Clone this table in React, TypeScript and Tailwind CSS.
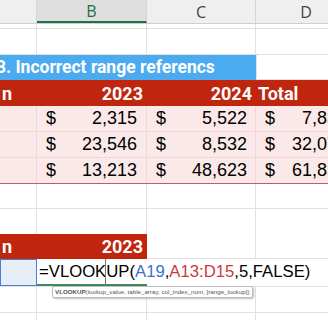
const grid = "border-[#e1e1e1]";

const Dollar = ({ value, pl, pr }: { value: string; pl: string; pr: string }) => (
  <div className={`flex h-full items-center justify-between ${pl} ${pr}`}>
    <span>$</span>
    <span>{value}</span>
  </div>
);

const rows = [
  ["2,315", "5,522", "7,837"],
  ["23,546", "8,532", "32,078"],
  ["13,213", "48,623", "61,836"],
];

const App = () => {
  return (
    <div className="h-[320px] w-[328px] overflow-hidden bg-white font-['Liberation_Sans',sans-serif] text-black">
      {/* column headers */}
      <div className="flex h-[24px] border-b border-[#cfcfcf] bg-[#efefef] text-[16px] font-['Open_Sans',sans-serif] text-[#444]">
        <div className="w-[37px] shrink-0 border-r border-[#d4d4d4]" />
        <div className="flex w-[110px] shrink-0 items-center justify-center border-b-2 border-r border-b-[#1e7145] border-r-[#d4d4d4] bg-[#dedede] text-[#1e7145]">
          B
        </div>
        <div className="flex w-[109px] shrink-0 items-center justify-center border-r border-[#d4d4d4]">C</div>
        <div className="flex w-[100px] shrink-0 items-center justify-center">D</div>
      </div>

      {/* partial row + blank row */}
      <div className={`flex h-[5px] border-b ${grid}`}>
        <div className={`w-[37px] shrink-0 border-r ${grid}`} />
        <div className={`w-[110px] shrink-0 border-r ${grid}`} />
        <div className={`w-[109px] shrink-0 border-r ${grid}`} />
      </div>
      <div className={`flex h-[26px] border-b ${grid}`}>
        <div className={`w-[37px] shrink-0 border-r ${grid}`} />
        <div className={`w-[110px] shrink-0 border-r ${grid}`} />
        <div className={`w-[109px] shrink-0 border-r ${grid}`} />
      </div>

      {/* title */}
      <div className="flex h-[25px]">
        <div className="flex w-[256px] shrink-0 items-center overflow-hidden whitespace-nowrap bg-[#4babf0] font-['Roboto',sans-serif] text-[17.5px] font-bold text-white">
          <span className="-ml-[4px]">3. Incorrect range referencs</span>
        </div>
        <div className={`flex-1 border-l border-b ${grid}`} />
      </div>

      {/* red header */}
      <div className="flex h-[26px] items-center bg-[#c0250e] font-['Roboto',sans-serif] text-[18px] font-bold text-white">
        <div className="w-[37px] shrink-0 pl-[2px]">n</div>
        <div className="w-[110px] shrink-0 pr-[4px] text-right">2023</div>
        <div className="w-[109px] shrink-0 pr-[4px] text-right">2024</div>
        <div className="flex-1 whitespace-nowrap pl-[2px]">Total</div>
      </div>

      {/* data */}
      <div className="bg-[#fbe9e9] text-[18px]">
        {rows.map((r, i) => (
          <div
            key={i}
            className={`flex h-[26px] border-b ${i === 2 ? "border-[#c9595b]" : "border-[#f0d6d6]"}`}
          >
            <div className="w-[37px] shrink-0 border-r border-[#f0d6d6]" />
            <div className="w-[110px] shrink-0 border-r border-[#f0d6d6]">
              <Dollar value={r[0]} pl="pl-[9px]" pr="pr-[9px]" />
            </div>
            <div className="w-[109px] shrink-0 border-r border-[#f0d6d6]">
              <Dollar value={r[1]} pl="pl-[9px]" pr="pr-[8px]" />
            </div>
            <div className="w-[100px] shrink-0">
              <Dollar value={r[2]} pl="pl-[9px]" pr="pr-[9px]" />
            </div>
          </div>
        ))}
      </div>

      {/* blank rows */}
      {[0, 1].map((i) => (
        <div key={i} className={`flex h-[25px] ${i === 0 ? `border-b ${grid}` : ""}`}>
          <div className={`w-[37px] shrink-0 border-r ${grid}`} />
          <div className={`w-[110px] shrink-0 border-r ${grid}`} />
          <div className={`w-[109px] shrink-0 border-r ${grid}`} />
        </div>
      ))}

      {/* second red header */}
      <div className="flex h-[25px]">
        <div className="flex w-[147px] shrink-0 items-center bg-[#c0250e] font-['Roboto',sans-serif] text-[18px] font-bold text-white">
          <div className="w-[37px] shrink-0 pl-[2px]">n</div>
          <div className="w-[110px] shrink-0 pr-[4px] text-right">2023</div>
        </div>
        <div className={`w-[109px] shrink-0 border-r border-b ${grid}`} />
        <div className={`flex-1 border-b ${grid}`} />
      </div>

      {/* formula row */}
      <div className="relative flex h-[27px]">
        <div className="w-[37px] shrink-0 border border-[#4a7ed4] bg-[#e8eef8]" />
        <div className="w-[110px] shrink-0 border-b-2 border-[#3f8c62]" />
        <div className="w-[109px] shrink-0" />
        <div className="flex-1" />
        <div className="absolute left-[39px] top-0 flex h-full items-center whitespace-nowrap text-[16.7px] leading-none">
          <span>=VLOOKUP(</span>
          <span className="text-[#3b6fcf]">A19</span>
          <span>,</span>
          <span className="text-[#cc3a3a]">A13:D15</span>
          <span>,5,FALSE)</span>
        </div>
        <div className="absolute left-[105px] top-0 h-full w-px bg-[#777]" />
        <div className="absolute left-[52px] top-[27px] z-10 whitespace-nowrap rounded-[2px] border border-[#bdbdbd] bg-white px-[2px] py-[1px] text-[6.2px] leading-[8px] text-[#555] shadow-[1px_1px_2px_rgba(0,0,0,0.25)]">
          <span className="font-bold">VLOOKUP</span>(lookup_value, table_array, col_index_num, [range_lookup])
        </div>
      </div>

      {/* trailing rows */}
      {[0, 1].map((i) => (
        <div key={i} className={`flex h-[26px] border-t ${grid}`}>
          <div className={`w-[37px] shrink-0 border-r ${grid}`} />
          <div className={`w-[110px] shrink-0 border-r ${grid}`} />
          <div className={`w-[109px] shrink-0 border-r ${grid}`} />
        </div>
      ))}
    </div>
  );
};

export default App;
